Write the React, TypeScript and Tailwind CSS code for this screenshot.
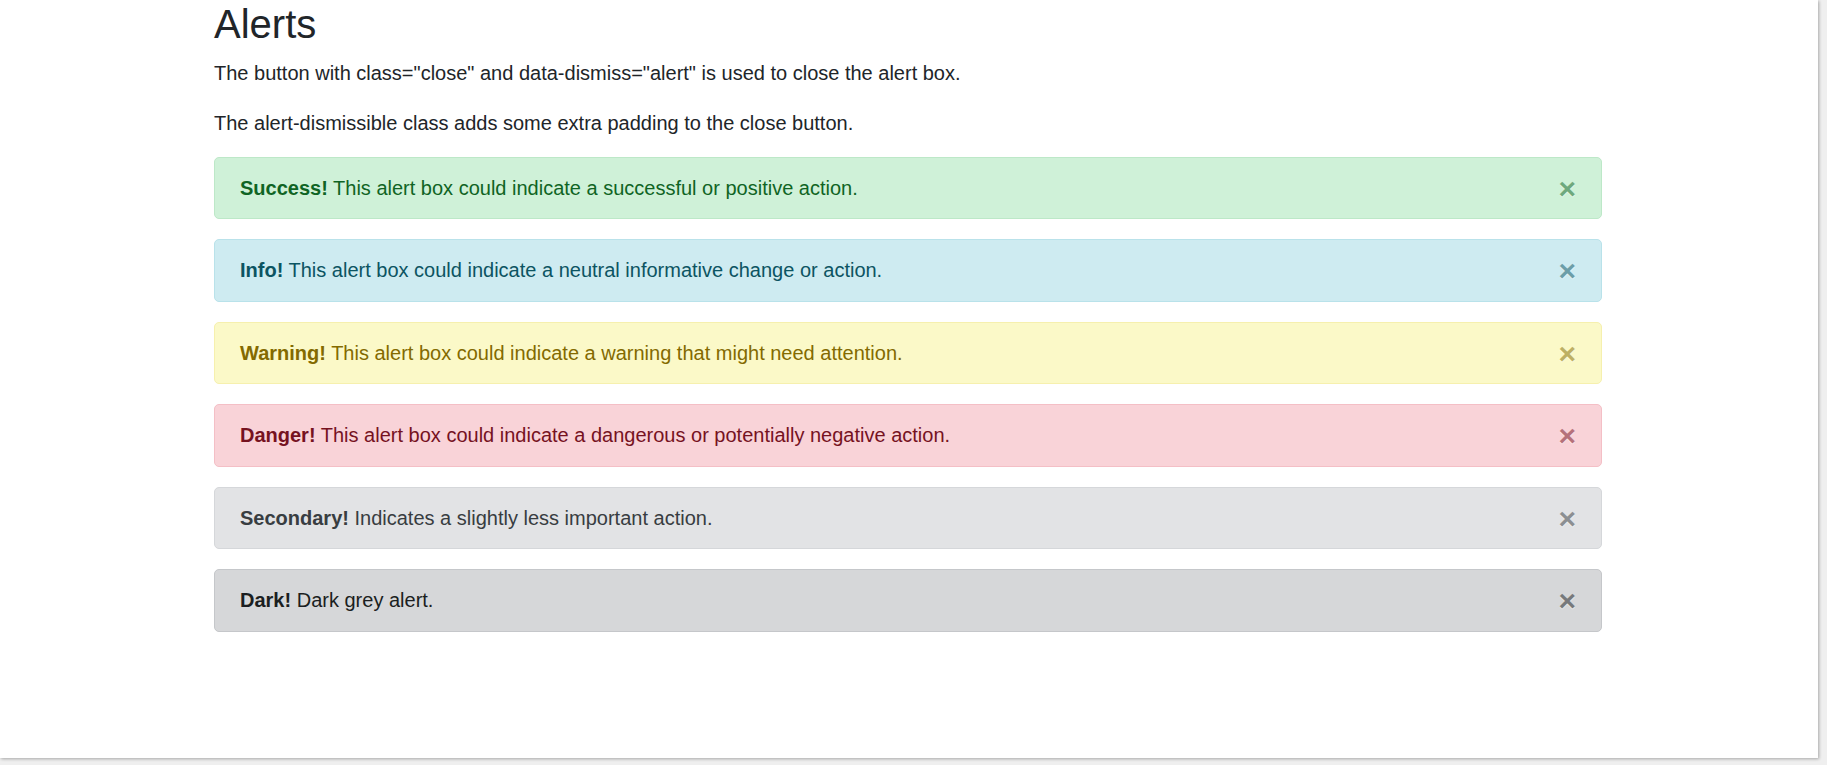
const ALERTS = [
  {
    title: 'Success!',
    text: 'This alert box could indicate a successful or positive action.',
    className: 'bg-[#cff1d8] border-[#bde8c8] text-[#0f6424]',
  },
  {
    title: 'Info!',
    text: 'This alert box could indicate a neutral informative change or action.',
    className: 'bg-[#ceebf1] border-[#b9e2ea] text-[#0c5462]',
  },
  {
    title: 'Warning!',
    text: 'This alert box could indicate a warning that might need attention.',
    className: 'bg-[#fbf9c8] border-[#f6f0ae] text-[#836a00]',
  },
  {
    title: 'Danger!',
    text: 'This alert box could indicate a dangerous or potentially negative action.',
    className: 'bg-[#f9d3d8] border-[#f4bfc6] text-[#76121f]',
  },
  {
    title: 'Secondary!',
    text: 'Indicates a slightly less important action.',
    className: 'bg-[#e2e3e5] border-[#d5d7da] text-[#383d41]',
  },
  {
    title: 'Dark!',
    text: 'Dark grey alert.',
    className: 'bg-[#d6d7d9] border-[#c5c7ca] text-[#1b1e21]',
  },
];

function Alert({ title, text, className }: { title: string; text: string; className: string }) {
  return (
    <div className={`relative mb-5 rounded-[5px] border py-[15.25px] pl-[25px] pr-[80px] ${className}`}>
      <strong className="font-bold">{title}</strong> {text}
      <button
        type="button"
        className="absolute right-0 top-0 px-[25px] py-[16px] text-[30px] font-bold leading-none text-inherit opacity-50 [text-shadow:0_1px_0_#fff]"
      >
        ×
      </button>
    </div>
  );
}

export default function App() {
  return (
    <div className="h-[765px] w-[1827px] overflow-hidden bg-[#efefef]">
      <div
        className="h-[758px] w-[1818px] bg-white text-[20px] leading-[30px] text-[#212529] shadow-[1px_1px_3px_rgba(0,0,0,0.3)]"
        style={{ fontFamily: '"Liberation Sans", Arial, sans-serif' }}
      >
        <div className="ml-[214px] w-[1388px] pt-[0.5px]">
          <h2 className="-mt-px mb-[10px] text-[40px] font-medium leading-[48px]">Alerts</h2>
          <p className="mb-5">The button with class="close" and data-dismiss="alert" is used to close the alert box.</p>
          <p className="mb-[19px]">The alert-dismissible class adds some extra padding to the close button.</p>
          {ALERTS.map((a) => (
            <Alert key={a.title} {...a} />
          ))}
        </div>
      </div>
    </div>
  );
}
